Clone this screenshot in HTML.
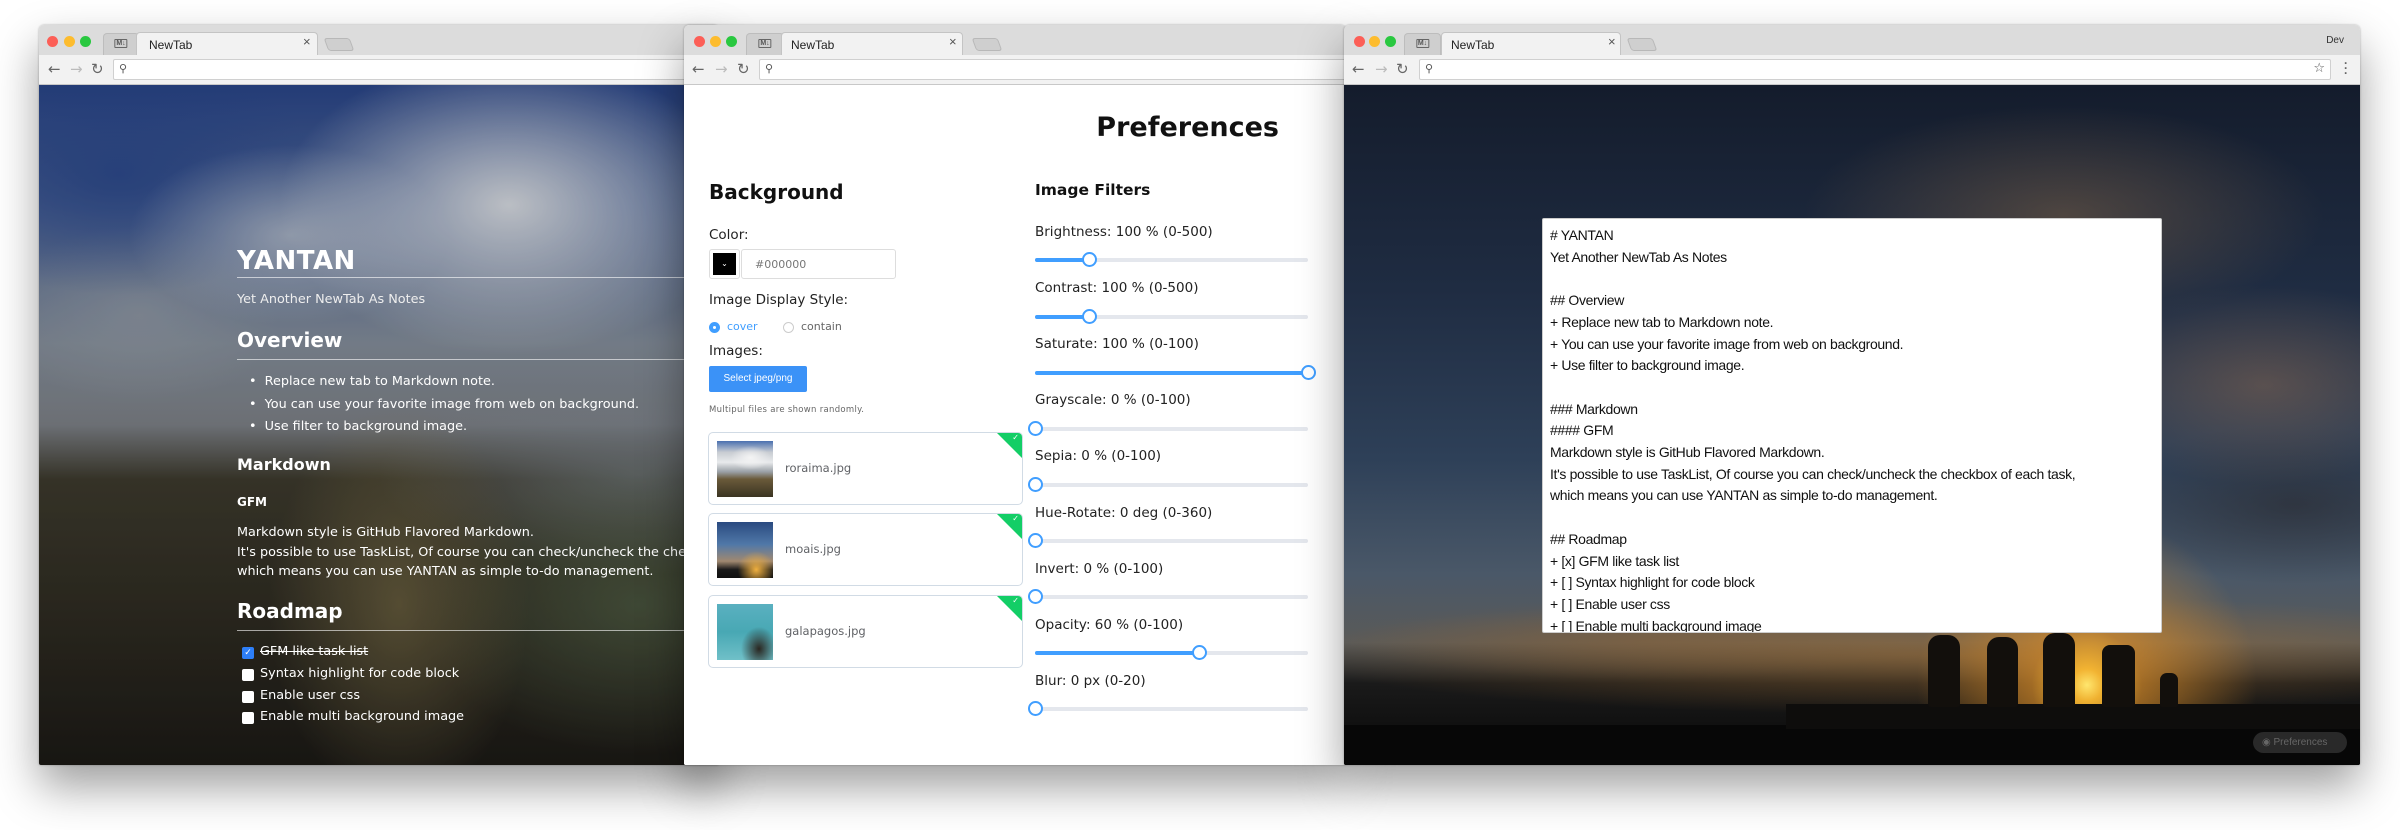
<!DOCTYPE html>
<html><head><meta charset="utf-8">
<style>
*{margin:0;padding:0;box-sizing:border-box}
body{width:2400px;height:830px;background:#fff;position:relative;overflow:hidden;font-family:"DejaVu Sans","Liberation Sans",sans-serif}
.win{position:absolute;top:25px;height:740px;border-radius:5px 5px 2px 2px;overflow:hidden;box-shadow:0 22px 45px rgba(0,0,0,.38),0 0 2px rgba(0,0,0,.3)}
.tb{position:absolute;left:0;right:0;top:0;height:30px;background:#dcdcdc}
.tl{position:absolute;top:11px;width:11px;height:11px;border-radius:50%}
.r{background:#fc5f57}.y{background:#fdbc2e}.g{background:#29c840}
.tab{position:absolute;top:7px;height:24px;background:#f2f2f2;border:1px solid #c4c4c4;border-bottom:none;border-radius:4px 4px 0 0;font:12px "Liberation Sans",sans-serif;color:#222;padding:5px 0 0 12px}
.pin{position:absolute;top:8px;height:23px;background:#cfcfcf;border:1px solid #bdbdbd;border-bottom:none;border-radius:4px 4px 0 0}
.pin:after{content:"M↓";position:absolute;left:50%;top:5px;transform:translateX(-50%);font:bold 7px "Liberation Sans",sans-serif;color:#555;border:1px solid #666;padding:0 1px;border-radius:1px}
.ghost{position:absolute;top:13px;width:26px;height:13px;background:#cfcfcf;border:1px solid #b8b8b8;border-radius:3px;transform:skewX(20deg)}
.x{position:absolute;font:13px "Liberation Sans",sans-serif;color:#555;top:9px}
.bar{position:absolute;left:0;right:0;top:30px;height:30px;background:#f2f2f2;border-bottom:1px solid #c8c8c8}
.omni{position:absolute;top:4px;height:21px;background:#fff;border:1px solid #d0d0d0;border-radius:2px}
.ic{position:absolute;top:5px;font:15px "DejaVu Sans",sans-serif;color:#666}
.content{position:absolute;left:0;right:0;top:60px;bottom:0}
.w1 .md{position:absolute;color:#fff;white-space:nowrap}
.rule{position:absolute;height:1px;background:rgba(255,255,255,.6)}
.cb{position:absolute;width:12px;height:12px;background:#fff;border-radius:2px}
.lab{position:absolute;font-size:13.5px;color:#222;white-space:nowrap}
.track{position:absolute;height:4px;background:#e4e7ed;border-radius:2px;left:351px;width:273px}
.fill{position:absolute;left:0;top:0;height:4px;background:#409eff;border-radius:2px}
.thumb{position:absolute;top:-6px;width:15px;height:15px;border:2px solid #409eff;background:#fff;border-radius:50%;margin-left:-7px}
.card{position:absolute;left:24px;width:315px;height:73px;border:1px solid #d1dbe5;border-radius:5px;overflow:hidden;background:#fff}
.card .im{position:absolute;left:8px;top:8px;width:56px;height:56px}
.card .nm{position:absolute;left:76px;top:28px;font-size:11.5px;color:#606266}
.card .tri{position:absolute;right:0;top:0;width:0;height:0;border-top:25px solid #13ce66;border-left:25px solid transparent}
.card .tri:after{content:"✓";position:absolute;top:-25px;right:3px;font-size:8px;color:#fff}
.ta{position:absolute;left:1542px;top:218px;width:620px;height:415px;background:#fff;border:1px solid #ccc;border-radius:2px;font:14px "Liberation Sans",sans-serif;color:#111;line-height:21.7px;padding:6px 0 0 7px;white-space:pre;letter-spacing:-.35px;overflow:hidden}
</style></head><body>

<!-- Window 1 -->
<div class="win w1" style="left:39px;width:680px">
 <div class="tb">
  <div class="tl r" style="left:8px"></div><div class="tl y" style="left:25px"></div><div class="tl g" style="left:41px"></div>
  <div class="pin" style="left:64px;width:36px"></div>
  <div class="tab" style="left:97px;width:182px">NewTab</div>
  <div class="x" style="left:264px">×</div>
  <div class="ghost" style="left:287px"></div>
 </div>
 <div class="bar">
  <div class="ic" style="left:9px">←</div><div class="ic" style="left:31px;color:#bbb">→</div><div class="ic" style="left:52px">↻</div>
  <div class="omni" style="left:74px;right:-20px"><span style="position:absolute;left:5px;top:2px;font-size:11px;color:#555">⚲</span></div>
 </div>
 <div class="content" style="background:
  radial-gradient(ellipse 230px 150px at 470px 120px,rgba(225,228,232,.95),rgba(210,214,218,0) 100%),
  radial-gradient(ellipse 160px 90px at 250px 150px,rgba(190,198,210,.75),rgba(190,195,200,0)),
  radial-gradient(ellipse 200px 120px at 80px 90px,rgba(40,70,140,.8),rgba(40,70,140,0)),
  radial-gradient(ellipse 140px 90px at 100px 230px,rgba(150,158,168,.7),rgba(160,165,170,0)),
  radial-gradient(ellipse 130px 200px at 360px 520px,rgba(140,125,80,.55),rgba(150,140,95,0)),
  radial-gradient(ellipse 220px 150px at 600px 520px,rgba(90,110,80,.6),rgba(90,110,80,0)),
  radial-gradient(ellipse 260px 100px at 600px 390px,rgba(130,140,150,.6),rgba(120,130,130,0)),
  linear-gradient(180deg,#2a468a 0%,#50689a 18%,#858f9c 38%,#7e8288 50%,#3e3b2e 58%,#2f2c22 78%,#1c1a16 100%);">
  <div style="position:absolute;inset:0;background:rgba(0,0,0,.14)"></div>
  <div class="md" style="left:198px;top:161px;font-size:26px;font-weight:bold;letter-spacing:.5px">YANTAN</div>
  <div class="rule" style="left:198px;right:0;top:192px"></div>
  <div class="md" style="left:198px;top:207px;font-size:12.8px;color:#eee">Yet Another NewTab As Notes</div>
  <div class="md" style="left:198px;top:243px;font-size:20px;font-weight:bold">Overview</div>
  <div class="rule" style="left:198px;right:0;top:274px"></div>
  <div class="md" style="left:210px;top:286px;font-size:12.8px;line-height:22.5px">•&nbsp;&nbsp;Replace new tab to Markdown note.<br>•&nbsp;&nbsp;You can use your favorite image from web on background.<br>•&nbsp;&nbsp;Use filter to background image.</div>
  <div class="md" style="left:198px;top:370px;font-size:16px;font-weight:bold">Markdown</div>
  <div class="md" style="left:198px;top:410px;font-size:12px;font-weight:bold">GFM</div>
  <div class="md" style="left:198px;top:438px;font-size:12.8px;line-height:19.5px">Markdown style is GitHub Flavored Markdown.<br>It's possible to use TaskList, Of course you can check/uncheck the checkbox of each task,<br>which means you can use YANTAN as simple to-do management.</div>
  <div class="md" style="left:198px;top:514px;font-size:20px;font-weight:bold">Roadmap</div>
  <div class="rule" style="left:198px;right:0;top:545px"></div>
  <div class="cb" style="left:203px;top:562px;background:#2d7ff9;color:#fff;font-size:9px;text-align:center;line-height:12px">✓</div>
  <div class="md" style="left:221px;top:559px;font-size:12.8px;text-decoration:line-through">GFM like task list</div>
  <div class="cb" style="left:203px;top:584px"></div><div class="md" style="left:221px;top:581px;font-size:12.8px">Syntax highlight for code block</div>
  <div class="cb" style="left:203px;top:606px"></div><div class="md" style="left:221px;top:603px;font-size:12.8px">Enable user css</div>
  <div class="cb" style="left:203px;top:627px"></div><div class="md" style="left:221px;top:624px;font-size:12.8px">Enable multi background image</div>
 </div>
</div>

<!-- Window 2 -->
<div class="win" style="left:684px;width:662px;background:#fff">
 <div class="tb">
  <div class="tl r" style="left:10px"></div><div class="tl y" style="left:26px"></div><div class="tl g" style="left:42px"></div>
  <div class="pin" style="left:62px;width:38px"></div>
  <div class="tab" style="left:97px;width:182px;padding-left:9px">NewTab</div>
  <div class="x" style="left:265px">×</div>
  <div class="ghost" style="left:290px"></div>
 </div>
 <div class="bar">
  <div class="ic" style="left:8px">←</div><div class="ic" style="left:31px;color:#bbb">→</div><div class="ic" style="left:53px">↻</div>
  <div class="omni" style="left:75px;right:-10px"><span style="position:absolute;left:5px;top:2px;font-size:11px;color:#555">⚲</span></div>
 </div>
 <div class="content" style="background:#fff">
  <div style="position:absolute;right:67px;top:27px;font-size:27px;font-weight:bold;color:#111">Preferences</div>
  <div style="position:absolute;left:25px;top:95px;font-size:20px;font-weight:bold;color:#111">Background</div>
  <div class="lab" style="left:25px;top:142px">Color:</div>
  <div style="position:absolute;left:25px;top:164px;width:31px;height:30px;border:1px solid #ddd;border-radius:3px"><div style="position:absolute;left:3px;top:3px;width:23px;height:22px;background:#000;color:#fff;font-size:8px;text-align:center;line-height:22px">⌄</div></div>
  <div style="position:absolute;left:57px;top:164px;width:155px;height:30px;border:1px solid #ddd;border-radius:3px;font-size:11px;color:#777;padding:8px 0 0 13px">#000000</div>
  <div class="lab" style="left:25px;top:207px">Image Display Style:</div>
  <div style="position:absolute;left:25px;top:237px;width:11px;height:11px;border-radius:50%;background:#409eff"><div style="position:absolute;left:4px;top:4px;width:3px;height:3px;background:#fff;border-radius:50%"></div></div>
  <div style="position:absolute;left:43px;top:235px;font-size:11px;color:#409eff">cover</div>
  <div style="position:absolute;left:99px;top:237px;width:11px;height:11px;border-radius:50%;border:1px solid #ccc"></div>
  <div style="position:absolute;left:117px;top:235px;font-size:11px;color:#666">contain</div>
  <div class="lab" style="left:25px;top:258px">Images:</div>
  <div style="position:absolute;left:25px;top:281px;width:98px;height:26px;background:#3b92f7;border-radius:2px;color:#fff;font:10px 'Liberation Sans',sans-serif;text-align:center;line-height:26px">Select jpeg/png</div>
  <div style="position:absolute;left:25px;top:320px;font-size:8.5px;color:#666;letter-spacing:.3px">Multipul files are shown randomly.</div>
  <div class="card" style="top:347px"><div class="im" style="background:radial-gradient(ellipse 20px 12px at 60% 30%,#f4f4f4,rgba(240,240,240,0)),linear-gradient(180deg,#4a70b0 0%,#c8ccd2 20%,#e8eaec 38%,#9aa0a6 55%,#6a5a3a 68%,#3a3422 100%)"></div><div class="nm">roraima.jpg</div><div class="tri"></div></div>
  <div class="card" style="top:428px"><div class="im" style="background:radial-gradient(circle at 70% 85%,#f0b040,rgba(240,176,64,0) 30%),linear-gradient(180deg,#2a4a80 0%,#5078a8 40%,#a08870 70%,#1a1a1a 85%,#101010 100%)"></div><div class="nm">moais.jpg</div><div class="tri"></div></div>
  <div class="card" style="top:510px"><div class="im" style="background:radial-gradient(ellipse 18px 22px at 75% 80%,#2a2620,rgba(42,38,32,0) 100%),linear-gradient(180deg,#5ab0c0,#48a8b4 50%,#70c0c8 100%)"></div><div class="nm">galapagos.jpg</div><div class="tri"></div></div>

  <div style="position:absolute;left:351px;top:96px;font-size:15.5px;font-weight:bold;color:#111">Image Filters</div>
  <div class="lab" style="left:351px;top:139px">Brightness: 100 % (0-500)</div>
  <div class="track" style="top:173px"><div class="fill" style="width:54px"></div><div class="thumb" style="left:54px"></div></div>
  <div class="lab" style="left:351px;top:195px">Contrast: 100 % (0-500)</div>
  <div class="track" style="top:230px"><div class="fill" style="width:54px"></div><div class="thumb" style="left:54px"></div></div>
  <div class="lab" style="left:351px;top:251px">Saturate: 100 % (0-100)</div>
  <div class="track" style="top:286px"><div class="fill" style="width:273px"></div><div class="thumb" style="left:273px"></div></div>
  <div class="lab" style="left:351px;top:307px">Grayscale: 0 % (0-100)</div>
  <div class="track" style="top:342px"><div class="thumb" style="left:0"></div></div>
  <div class="lab" style="left:351px;top:363px">Sepia: 0 % (0-100)</div>
  <div class="track" style="top:398px"><div class="thumb" style="left:0"></div></div>
  <div class="lab" style="left:351px;top:420px">Hue-Rotate: 0 deg (0-360)</div>
  <div class="track" style="top:454px"><div class="thumb" style="left:0"></div></div>
  <div class="lab" style="left:351px;top:476px">Invert: 0 % (0-100)</div>
  <div class="track" style="top:510px"><div class="thumb" style="left:0"></div></div>
  <div class="lab" style="left:351px;top:532px">Opacity: 60 % (0-100)</div>
  <div class="track" style="top:566px"><div class="fill" style="width:164px"></div><div class="thumb" style="left:164px"></div></div>
  <div class="lab" style="left:351px;top:588px">Blur: 0 px (0-20)</div>
  <div class="track" style="top:622px"><div class="thumb" style="left:0"></div></div>
 </div>
</div>

<!-- Window 3 -->
<div class="win" style="left:1344px;width:1016px">
 <div class="tb">
  <div class="tl r" style="left:10px"></div><div class="tl y" style="left:25px"></div><div class="tl g" style="left:41px"></div>
  <div class="pin" style="left:60px;width:37px"></div>
  <div class="tab" style="left:97px;width:180px;padding-left:9px">NewTab</div>
  <div class="x" style="left:264px">×</div>
  <div class="ghost" style="left:285px"></div>
  <div style="position:absolute;right:16px;top:10px;font:10px 'Liberation Sans',sans-serif;color:#333">Dev</div>
 </div>
 <div class="bar">
  <div class="ic" style="left:8px">←</div><div class="ic" style="left:31px;color:#bbb">→</div><div class="ic" style="left:52px">↻</div>
  <div class="omni" style="left:75px;width:912px"><span style="position:absolute;left:5px;top:2px;font-size:11px;color:#555">⚲</span><span style="position:absolute;right:5px;top:1px;font-size:13px;color:#555">☆</span></div>
  <div style="position:absolute;right:12px;top:6px;font:bold 12px sans-serif;color:#666;line-height:5px">·<br>·<br>·</div>
 </div>
 <div class="content" style="background:
  radial-gradient(circle at 743px 600px,rgba(255,230,110,1) 0,rgba(250,185,50,.95) 16px,rgba(225,145,40,.6) 55px,rgba(200,120,40,0) 170px),
  radial-gradient(ellipse 650px 60px at 600px 570px,rgba(170,115,50,.55),rgba(150,100,50,0)),
  radial-gradient(ellipse 300px 40px at 300px 555px,rgba(120,90,60,.45),rgba(120,90,60,0)),
  radial-gradient(ellipse 260px 110px at 720px 130px,rgba(120,95,70,.55),rgba(110,90,70,0)),
  radial-gradient(ellipse 200px 100px at 920px 300px,rgba(150,110,80,.45),rgba(150,110,80,0)),
  radial-gradient(ellipse 200px 80px at 950px 420px,rgba(40,40,45,.6),rgba(60,70,80,0)),
  linear-gradient(180deg,#141c2c 0%,#1f2c42 30%,#2e4058 55%,#4a5868 72%,#5a5a58 82%,#1a1a1a 88%,#080808 100%);">
  <div style="position:absolute;left:0;right:0;top:640px;bottom:0;background:#070707"></div>
  <div style="position:absolute;left:442px;right:0;top:619px;height:25px;background:#0e0d0c"></div>
  <div style="position:absolute;left:584px;top:550px;width:32px;height:72px;background:#120f0c;border-radius:12px 12px 3px 3px"></div>
  <div style="position:absolute;left:643px;top:552px;width:31px;height:70px;background:#120f0c;border-radius:12px 12px 3px 3px"></div>
  <div style="position:absolute;left:699px;top:548px;width:32px;height:74px;background:#120f0c;border-radius:12px 12px 3px 3px"></div>
  <div style="position:absolute;left:758px;top:560px;width:33px;height:62px;background:#120f0c;border-radius:8px 8px 3px 3px"></div>
  <div style="position:absolute;left:816px;top:588px;width:18px;height:34px;background:#120f0c;border-radius:7px 7px 2px 2px"></div>
  <div style="position:absolute;left:909px;top:647px;width:94px;height:21px;border-radius:11px;background:rgba(70,70,70,.55);font:10px 'Liberation Sans',sans-serif;color:#666;line-height:21px;padding-left:9px">◉ Preferences</div>
 </div>
</div>

<div class="ta"># YANTAN
Yet Another NewTab As Notes

## Overview
+ Replace new tab to Markdown note.
+ You can use your favorite image from web on background.
+ Use filter to background image.

### Markdown
#### GFM
Markdown style is GitHub Flavored Markdown.
It's possible to use TaskList, Of course you can check/uncheck the checkbox of each task,
which means you can use YANTAN as simple to-do management.

## Roadmap
+ [x] GFM like task list
+ [ ] Syntax highlight for code block
+ [ ] Enable user css
+ [ ] Enable multi background image</div>
</body></html>
